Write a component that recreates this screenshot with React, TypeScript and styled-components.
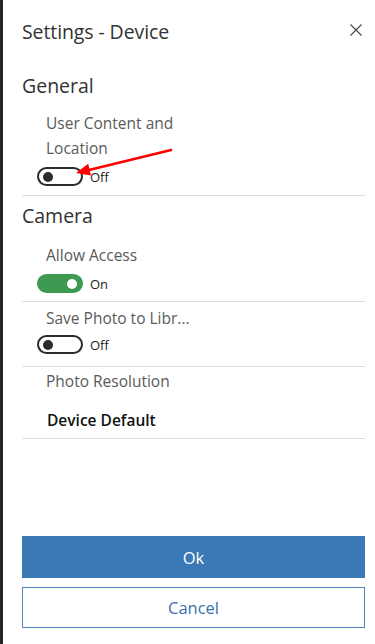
import React from "react";
import styled, { createGlobalStyle } from "styled-components";

const Global = createGlobalStyle`
  html, body { margin: 0; padding: 0; background: #fff; }
  body { font-family: "Open Sans", "Noto Sans", sans-serif; }
  * { box-sizing: border-box; }
`;

const Page = styled.div`
  display: flex;
  width: 375px;
  height: 644px;
  background: #fff;
`;

const EdgeBar = styled.div`
  width: 3px;
  flex: none;
  background: #262626;
`;

const Panel = styled.div`
  position: relative;
  flex: 1;
  display: flex;
  flex-direction: column;
  padding: 0 10px 16px 19px;
`;

const Header = styled.div`
  height: 62px;
  display: flex;
  align-items: center;
  justify-content: space-between;
`;

const Title = styled.h1`
  margin: 0;
  font-size: 19.5px;
  font-weight: 400;
  color: #333;
  letter-spacing: -0.1px;
`;

const Close = styled.button`
  border: 0;
  background: none;
  padding: 0;
  margin: -2px 3px 0 0;
  width: 12px;
  height: 12px;
  display: flex;
`;

const SectionTitle = styled.h2<{ $top: number }>`
  margin: ${(p) => p.$top}px 0 0;
  font-size: 19.5px;
  line-height: 28px;
  font-weight: 400;
  color: #333;
`;

const Item = styled.div<{ $pt: number; $pb: number }>`
  padding: ${(p) => p.$pt}px 0 ${(p) => p.$pb}px 15px;
  border-bottom: 1px solid #dcdcdc;
  display: flex;
  flex-direction: column;
`;

const Label = styled.div`
  padding-left: 9px;
  font-size: 15.5px;
  line-height: 25px;
  color: #5a5a5a;
  width: 160px;
`;

const Value = styled.div`
  padding-left: 10px;
  margin-top: 14px;
  font-size: 15.5px;
  line-height: 25px;
  font-weight: 600;
  color: #111;
`;

const ToggleRow = styled.div<{ $mt: number }>`
  display: flex;
  align-items: center;
  gap: 7px;
  margin-top: ${(p) => p.$mt}px;
`;

const Track = styled.div<{ $on: boolean }>`
  width: 46px;
  height: 19px;
  border-radius: 10px;
  border: 2px solid ${(p) => (p.$on ? "#3d9a50" : "#2b2b2b")};
  background: ${(p) => (p.$on ? "#3d9a50" : "#fff")};
  display: flex;
  align-items: center;
  justify-content: ${(p) => (p.$on ? "flex-end" : "flex-start")};
  padding: 0 4px;
`;

const Knob = styled.div<{ $on: boolean }>`
  width: 10px;
  height: 10px;
  border-radius: 50%;
  background: ${(p) => (p.$on ? "#fff" : "#2b2b2b")};
`;

const State = styled.span`
  font-size: 13px;
  color: #222;
`;

const Footer = styled.div`
  margin-top: auto;
  display: flex;
  flex-direction: column;
  gap: 9px;
`;

const Button = styled.button<{ $primary?: boolean }>`
  height: ${(p) => (p.$primary ? 42 : 41)}px;
  width: 100%;
  font-family: inherit;
  font-size: 16.5px;
  border: 1px solid ${(p) => (p.$primary ? "#3b78b6" : "#4f82bd")};
  background: ${(p) => (p.$primary ? "#3b78b6" : "#fff")};
  color: ${(p) => (p.$primary ? "#fff" : "#3a70ad")};
  padding: 0;
`;

const Arrow = styled.svg`
  position: absolute;
  left: 67px;
  top: 142px;
  pointer-events: none;
`;

function Toggle({ on }: { on: boolean }) {
  return (
    <>
      <Track $on={on}>
        <Knob $on={on} />
      </Track>
      <State>{on ? "On" : "Off"}</State>
    </>
  );
}

export default function App() {
  return (
    <Page>
      <Global />
      <EdgeBar />
      <Panel>
        <Header>
          <Title>Settings - Device</Title>
          <Close aria-label="Close">
            <svg width="12" height="12" viewBox="0 0 12 12">
              <path d="M0.5 0.5 L11.5 11.5 M11.5 0.5 L0.5 11.5" stroke="#444" strokeWidth="1.1" fill="none" />
            </svg>
          </Close>
        </Header>

        <SectionTitle $top={10}>General</SectionTitle>
        <Item $pt={11} $pb={9}>
          <Label>User Content and Location</Label>
          <ToggleRow $mt={6}>
            <Toggle on={false} />
          </ToggleRow>
        </Item>

        <SectionTitle $top={6}>Camera</SectionTitle>
        <Item $pt={13} $pb={8}>
          <Label>Allow Access</Label>
          <ToggleRow $mt={6}>
            <Toggle on={true} />
          </ToggleRow>
        </Item>
        <Item $pt={4} $pb={12}>
          <Label>Save Photo to Libr...</Label>
          <ToggleRow $mt={4}>
            <Toggle on={false} />
          </ToggleRow>
        </Item>
        <Item $pt={2} $pb={5}>
          <Label>Photo Resolution</Label>
          <Value>Device Default</Value>
        </Item>

        <Footer>
          <Button $primary>Ok</Button>
          <Button>Cancel</Button>
        </Footer>

        <Arrow width="110" height="40" viewBox="67 142 110 40">
          <line x1="168" y1="150" x2="84" y2="170.5" stroke="#f00" strokeWidth="2.6" strokeLinecap="round" />
          <polygon points="73,173 85.2,163.8 88,175.4" fill="#f00" />
        </Arrow>
      </Panel>
    </Page>
  );
}
